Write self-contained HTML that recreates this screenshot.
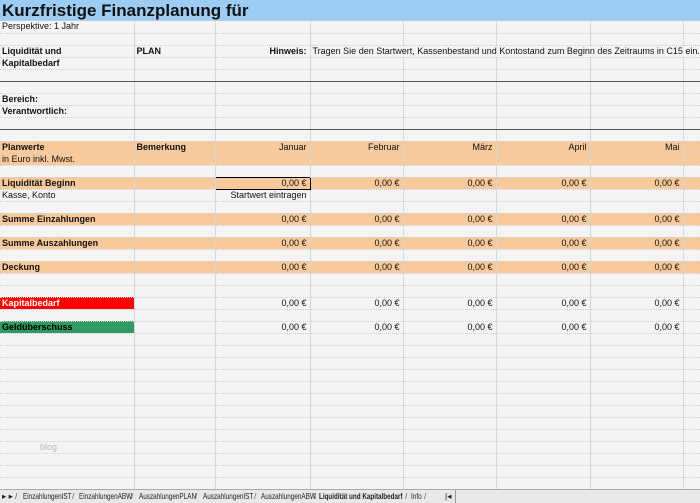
<!DOCTYPE html>
<html><head><meta charset="utf-8"><style>
*{margin:0;padding:0;box-sizing:border-box}
body{width:700px;height:503px;overflow:hidden;background:#f4f4f4;font-family:"Liberation Sans",sans-serif;font-size:9px;color:#111;position:relative}
.title{position:absolute;left:0;top:0;width:700px;height:21px;background:#9ccbf3;font-size:17px;font-weight:bold;line-height:21px;padding-left:2px;border-bottom:1px solid #bcd}
table{position:absolute;left:0;top:21px;border-collapse:collapse;table-layout:fixed;width:700px}
td{height:12px;border-right:1px solid #d6d6d6;border-bottom:1px dotted #cfcfcf;white-space:nowrap;overflow:visible;padding:0 2px;line-height:11px;vertical-align:middle}
td.r{text-align:right;padding-right:3px}
tr.o td{background:#f7c99b}
b{font-weight:bold}
tr.dk td{border-bottom:1px solid #555}
.tabs{position:absolute;left:0;top:489px;width:700px;height:14px;background:#e8e8e8;border-top:1px solid #aaa;font-size:8.5px;line-height:13px;color:#222}
.tabs span{position:absolute;top:0;white-space:nowrap;transform-origin:0 0;transform:scaleX(.75)}
.tabs i{position:absolute;top:0;font-style:normal;color:#666}
</style></head><body>
<div class="title">Kurzfristige Finanzplanung für</div>
<table>
<colgroup><col style="width:134px"><col style="width:81px"><col style="width:95px"><col style="width:93px"><col style="width:93px"><col style="width:94px"><col style="width:93px"><col style="width:17px"></colgroup>
<tr><td>Perspektive: 1 Jahr</td><td></td><td></td><td></td><td></td><td></td><td></td><td></td></tr>
<tr><td></td><td></td><td></td><td></td><td></td><td></td><td></td><td></td></tr>
<tr><td><b>Liquidität und</b></td><td><b>PLAN</b></td><td class="r"><b>Hinweis:</b></td><td colspan="5" style="overflow:hidden">Tragen Sie den Startwert, Kassenbestand und Kontostand zum Beginn des Zeitraums in C15 ein.</td></tr>
<tr><td><b>Kapitalbedarf</b></td><td></td><td></td><td></td><td></td><td></td><td></td><td></td></tr>
<tr class="dk"><td></td><td></td><td></td><td></td><td></td><td></td><td></td><td></td></tr>
<tr><td></td><td></td><td></td><td></td><td></td><td></td><td></td><td></td></tr>
<tr><td><b>Bereich:</b></td><td></td><td></td><td></td><td></td><td></td><td></td><td></td></tr>
<tr><td><b>Verantwortlich:</b></td><td></td><td></td><td></td><td></td><td></td><td></td><td></td></tr>
<tr class="dk"><td></td><td></td><td></td><td></td><td></td><td></td><td></td><td></td></tr>
<tr><td></td><td></td><td></td><td></td><td></td><td></td><td></td><td></td></tr>
<tr class="o"><td><b>Planwerte</b></td><td><b>Bemerkung</b></td><td class="r">Januar</td><td class="r">Februar</td><td class="r">März</td><td class="r">April</td><td class="r">Mai</td><td></td></tr>
<tr class="o"><td>in Euro inkl. Mwst.</td><td></td><td></td><td></td><td></td><td></td><td></td><td></td></tr>
<tr><td></td><td></td><td></td><td></td><td></td><td></td><td></td><td></td></tr>
<tr class="o"><td><b>Liquidität Beginn</b></td><td></td><td class="r" style="border:1px solid #000">0,00 €</td><td class="r">0,00 €</td><td class="r">0,00 €</td><td class="r">0,00 €</td><td class="r">0,00 €</td><td></td></tr>
<tr><td>Kasse, Konto</td><td></td><td class="r">Startwert eintragen</td><td></td><td></td><td></td><td></td><td></td></tr>
<tr><td></td><td></td><td></td><td></td><td></td><td></td><td></td><td></td></tr>
<tr class="o"><td><b>Summe Einzahlungen</b></td><td></td><td class="r">0,00 €</td><td class="r">0,00 €</td><td class="r">0,00 €</td><td class="r">0,00 €</td><td class="r">0,00 €</td><td></td></tr>
<tr><td></td><td></td><td></td><td></td><td></td><td></td><td></td><td></td></tr>
<tr class="o"><td><b>Summe Auszahlungen</b></td><td></td><td class="r">0,00 €</td><td class="r">0,00 €</td><td class="r">0,00 €</td><td class="r">0,00 €</td><td class="r">0,00 €</td><td></td></tr>
<tr><td></td><td></td><td></td><td></td><td></td><td></td><td></td><td></td></tr>
<tr class="o"><td><b>Deckung</b></td><td></td><td class="r">0,00 €</td><td class="r">0,00 €</td><td class="r">0,00 €</td><td class="r">0,00 €</td><td class="r">0,00 €</td><td></td></tr>
<tr><td></td><td></td><td></td><td></td><td></td><td></td><td></td><td></td></tr>
<tr><td></td><td></td><td></td><td></td><td></td><td></td><td></td><td></td></tr>
<tr><td style="background:#f00;color:#fff"><b>Kapitalbedarf</b></td><td></td><td class="r">0,00 €</td><td class="r">0,00 €</td><td class="r">0,00 €</td><td class="r">0,00 €</td><td class="r">0,00 €</td><td></td></tr>
<tr><td></td><td></td><td></td><td></td><td></td><td></td><td></td><td></td></tr>
<tr><td style="background:#2f9a62;color:#000"><b>Geldüberschuss</b></td><td></td><td class="r">0,00 €</td><td class="r">0,00 €</td><td class="r">0,00 €</td><td class="r">0,00 €</td><td class="r">0,00 €</td><td></td></tr>
<tr><td></td><td></td><td></td><td></td><td></td><td></td><td></td><td></td></tr>
<tr><td></td><td></td><td></td><td></td><td></td><td></td><td></td><td></td></tr>
<tr><td></td><td></td><td></td><td></td><td></td><td></td><td></td><td></td></tr>
<tr><td></td><td></td><td></td><td></td><td></td><td></td><td></td><td></td></tr>
<tr><td></td><td></td><td></td><td></td><td></td><td></td><td></td><td></td></tr>
<tr><td></td><td></td><td></td><td></td><td></td><td></td><td></td><td></td></tr>
<tr><td></td><td></td><td></td><td></td><td></td><td></td><td></td><td></td></tr>
<tr><td></td><td></td><td></td><td></td><td></td><td></td><td></td><td></td></tr>
<tr><td></td><td></td><td></td><td></td><td></td><td></td><td></td><td></td></tr>
<tr><td style="padding-left:40px;color:#bbb">blog</td><td></td><td></td><td></td><td></td><td></td><td></td><td></td></tr>
<tr><td></td><td></td><td></td><td></td><td></td><td></td><td></td><td></td></tr>
<tr><td></td><td></td><td></td><td></td><td></td><td></td><td></td><td></td></tr>
<tr><td></td><td></td><td></td><td></td><td></td><td></td><td></td><td></td></tr>
</table>
<div class="tabs">
<i style="left:2px;color:#222">▸ ▸</i>
<i style="left:15px">/</i><span style="left:23px">EinzahlungenIST</span>
<i style="left:72px">/</i><span style="left:79px">EinzahlungenABW</span>
<i style="left:131px">/</i><span style="left:139px">AuszahlungenPLAN</span>
<i style="left:195px">/</i><span style="left:203px">AuszahlungenIST</span>
<i style="left:254px">/</i><span style="left:261px">AuszahlungenABW</span>
<i style="left:314px">\</i><span style="left:319px;font-weight:bold;transform:scaleX(.74)">Liquidität und Kapitalbedarf</span>
<i style="left:405px">/</i><span style="left:411px">Info</span><i style="left:424px">/</i>
<i style="left:445px;color:#222">|◂</i>
<i style="left:455px;width:1px;height:13px;background:#999"></i>
</div>
</body></html>
